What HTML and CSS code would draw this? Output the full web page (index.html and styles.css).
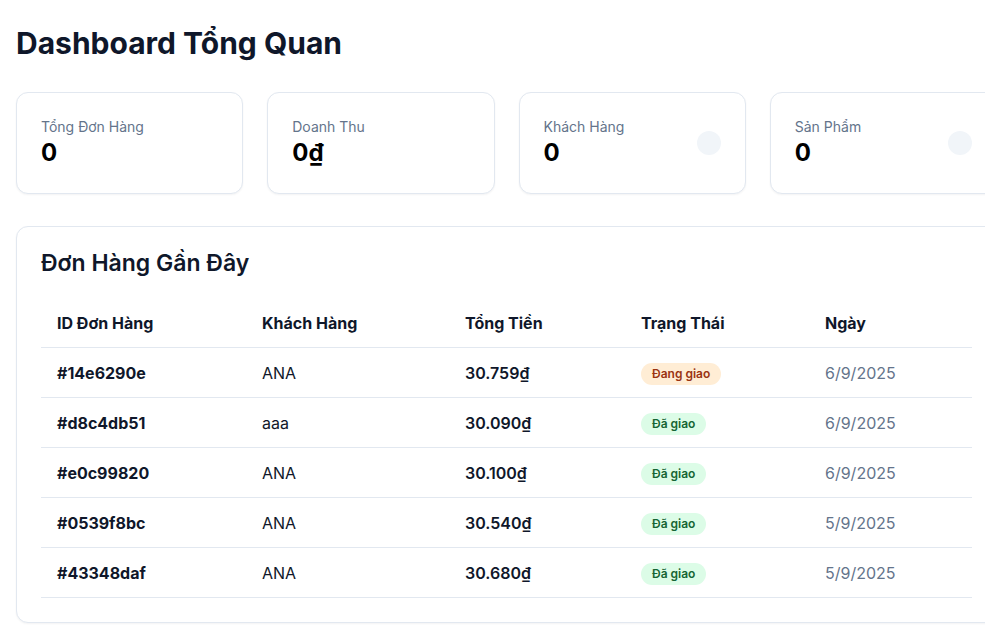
FILE: index.html
```html
<!DOCTYPE html>
<html lang="vi">
<head>
<meta charset="utf-8">
<title>Dashboard</title>
<link rel="stylesheet" href="styles.css">
</head>
<body>
<main class="page">
  <h1 class="page-title">Dashboard Tổng Quan</h1>
  <section class="stats">
    <div class="stat-card">
      <div class="stat-text">
        <div class="stat-label">Tổng Đơn Hàng</div>
        <div class="stat-value">0</div>
      </div>
    </div>
    <div class="stat-card">
      <div class="stat-text">
        <div class="stat-label">Doanh Thu</div>
        <div class="stat-value">0₫</div>
      </div>
    </div>
    <div class="stat-card">
      <div class="stat-text">
        <div class="stat-label">Khách Hàng</div>
        <div class="stat-value">0</div>
      </div>
      <div class="stat-icon"></div>
    </div>
    <div class="stat-card">
      <div class="stat-text">
        <div class="stat-label">Sản Phẩm</div>
        <div class="stat-value">0</div>
      </div>
      <div class="stat-icon"></div>
    </div>
  </section>
  <section class="panel">
    <h2 class="panel-title">Đơn Hàng Gần Đây</h2>
    <table class="orders">
      <colgroup>
        <col class="c1"><col class="c2"><col class="c3"><col class="c4"><col class="c5">
      </colgroup>
      <thead>
        <tr><th>ID Đơn Hàng</th><th>Khách Hàng</th><th>Tổng Tiền</th><th>Trạng Thái</th><th>Ngày</th></tr>
      </thead>
      <tbody>
        <tr><td class="id">#14e6290e</td><td>ANA</td><td class="amt">30.759₫</td><td><span class="badge shipping">Đang giao</span></td><td class="date">6/9/2025</td></tr>
        <tr><td class="id">#d8c4db51</td><td>aaa</td><td class="amt">30.090₫</td><td><span class="badge done">Đã giao</span></td><td class="date">6/9/2025</td></tr>
        <tr><td class="id">#e0c99820</td><td>ANA</td><td class="amt">30.100₫</td><td><span class="badge done">Đã giao</span></td><td class="date">6/9/2025</td></tr>
        <tr><td class="id">#0539f8bc</td><td>ANA</td><td class="amt">30.540₫</td><td><span class="badge done">Đã giao</span></td><td class="date">5/9/2025</td></tr>
        <tr><td class="id">#43348daf</td><td>ANA</td><td class="amt">30.680₫</td><td><span class="badge done">Đã giao</span></td><td class="date">5/9/2025</td></tr>
      </tbody>
    </table>
  </section>
</main>
</body>
</html>
```
FILE: styles.css
```css
html, body {
  margin: 0;
  padding: 0;
  background: #ffffff;
  overflow: hidden;
}
body {
  font-family: Inter, "Noto Sans", sans-serif;
  color: #0f172a;
}
.page {
  width: 981px;
  padding: 24px 16px;
}
.page-title {
  margin: 0 0 30px;
  font-size: 30px;
  line-height: 38px;
  font-weight: 700;
  color: #0f172a;
}
.stats {
  display: grid;
  grid-template-columns: repeat(4, 1fr);
  gap: 24px;
  margin-bottom: 32px;
}
.stat-card {
  display: flex;
  align-items: center;
  justify-content: space-between;
  padding: 24px;
  border: 1px solid #e2e8f0;
  border-radius: 12px;
  box-shadow: 0 1px 2px rgba(15, 23, 42, 0.05);
  background: #fff;
}
.stat-label {
  font-size: 14px;
  line-height: 20px;
  color: #64748b;
}
.stat-value {
  font-size: 24px;
  line-height: 32px;
  font-weight: 700;
  color: #000;
}
.stat-icon {
  width: 24px;
  height: 24px;
  border-radius: 50%;
  background: #f1f5f9;
}
.panel {
  border: 1px solid #e2e8f0;
  border-radius: 12px;
  box-shadow: 0 1px 2px rgba(15, 23, 42, 0.05);
  padding: 24px;
  background: #fff;
}
.panel-title {
  margin: 0 0 24px;
  font-size: 23px;
  line-height: 24px;
  font-weight: 600;
  color: #0f172a;
}
.orders {
  width: 100%;
  border-collapse: collapse;
  font-size: 16px;
}
.c1 { width: 205px; }
.c2 { width: 203px; }
.c3 { width: 176px; }
.c4 { width: 184px; }
.orders th {
  text-align: left;
  font-weight: 700;
  padding: 12px 16px;
  line-height: 24px;
  color: #0f172a;
  border-bottom: 1px solid #e2e8f0;
}
.orders td {
  height: 50px;
  box-sizing: border-box;
  padding: 0 16px;
  line-height: 24px;
  vertical-align: middle;
  border-bottom: 1px solid #e2e8f0;
  color: #0f172a;
}
.orders td.id {
  font-weight: 700;
}
.orders td.amt {
  font-weight: 600;
}
.orders td.date {
  color: #64748b;
}
.badge {
  display: inline-block;
  vertical-align: middle;
  padding: 3px 11px;
  border-radius: 999px;
  font-size: 12px;
  line-height: 16px;
  font-weight: 600;
}
.badge.shipping {
  background: #ffedd5;
  color: #9a3412;
}
.badge.done {
  background: #dcfce7;
  color: #166534;
}
```
